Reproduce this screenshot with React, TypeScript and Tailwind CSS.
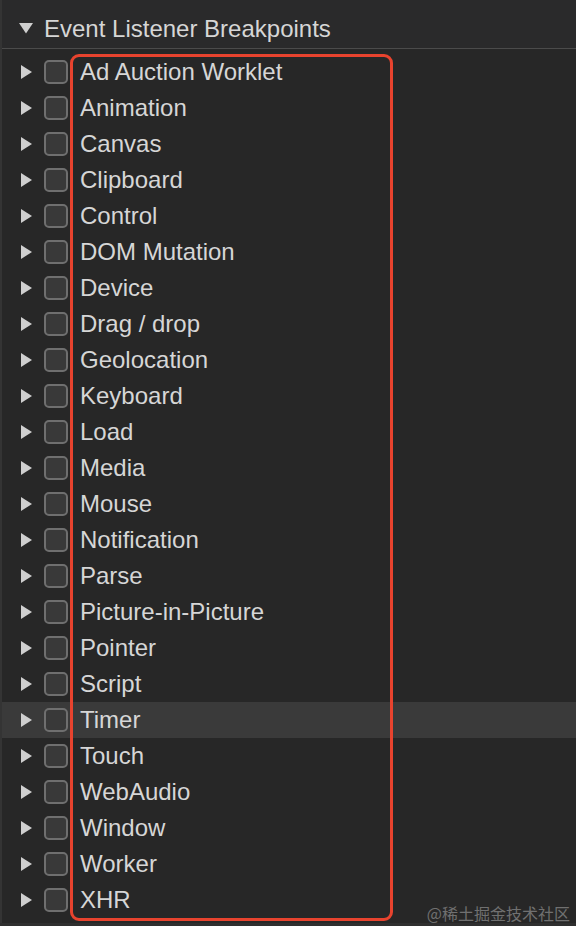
import React from "react";

const items = [
  "Ad Auction Worklet",
  "Animation",
  "Canvas",
  "Clipboard",
  "Control",
  "DOM Mutation",
  "Device",
  "Drag / drop",
  "Geolocation",
  "Keyboard",
  "Load",
  "Media",
  "Mouse",
  "Notification",
  "Parse",
  "Picture-in-Picture",
  "Pointer",
  "Script",
  "Timer",
  "Touch",
  "WebAudio",
  "Window",
  "Worker",
  "XHR",
];

export default function App() {
  return (
    <div
      className="relative w-[576px] h-[926px] overflow-hidden bg-[#272727] text-[#d6d6d6]"
      style={{ fontFamily: '"Liberation Sans", Arial, sans-serif' }}
    >
      <div className="absolute left-0 top-0 bottom-0 w-[2px] bg-[#343434]" />
      <div className="flex h-[49px] items-center border-b border-[#4b4b4b] bg-[#2a2a2b] pt-[9px]">
        <svg className="ml-[19px]" width="14" height="11" viewBox="0 0 14 11">
          <polygon points="0,0 14,0 7,10.5" fill="#cfcfcf" />
        </svg>
        <span className="ml-[11px] text-[24px] leading-none">Event Listener Breakpoints</span>
      </div>
      <div className="pt-[5px]">
        {items.map((name) => (
          <div
            key={name}
            className={`flex h-[36px] items-center ${name === "Timer" ? "bg-[#3a3a3a]" : ""}`}
          >
            <svg className="ml-[21px]" width="12" height="14" viewBox="0 0 12 14">
              <polygon points="0,0 11,7 0,14" fill="#cfcfcf" />
            </svg>
            <div className="ml-[11px] h-[24px] w-[24px] rounded-[5px] border-2 border-[#6f6f6f] bg-[#393939]" />
            <span className="ml-[12px] text-[24px] leading-none">{name}</span>
          </div>
        ))}
      </div>
      <div className="pointer-events-none absolute left-[70px] top-[54px] h-[867px] w-[323px] rounded-[9px] border-[3px] border-[#e8432e]" />
      <div
        className="absolute right-[6px] bottom-[5px] text-[16px] leading-none text-[#707070]"
        style={{ fontFamily: '"Noto Sans CJK SC", sans-serif' }}
      >
        @稀土掘金技术社区
      </div>
      <div className="absolute bottom-0 left-0 right-0 h-[3px] bg-[#2f2f2f]" />
    </div>
  );
}
